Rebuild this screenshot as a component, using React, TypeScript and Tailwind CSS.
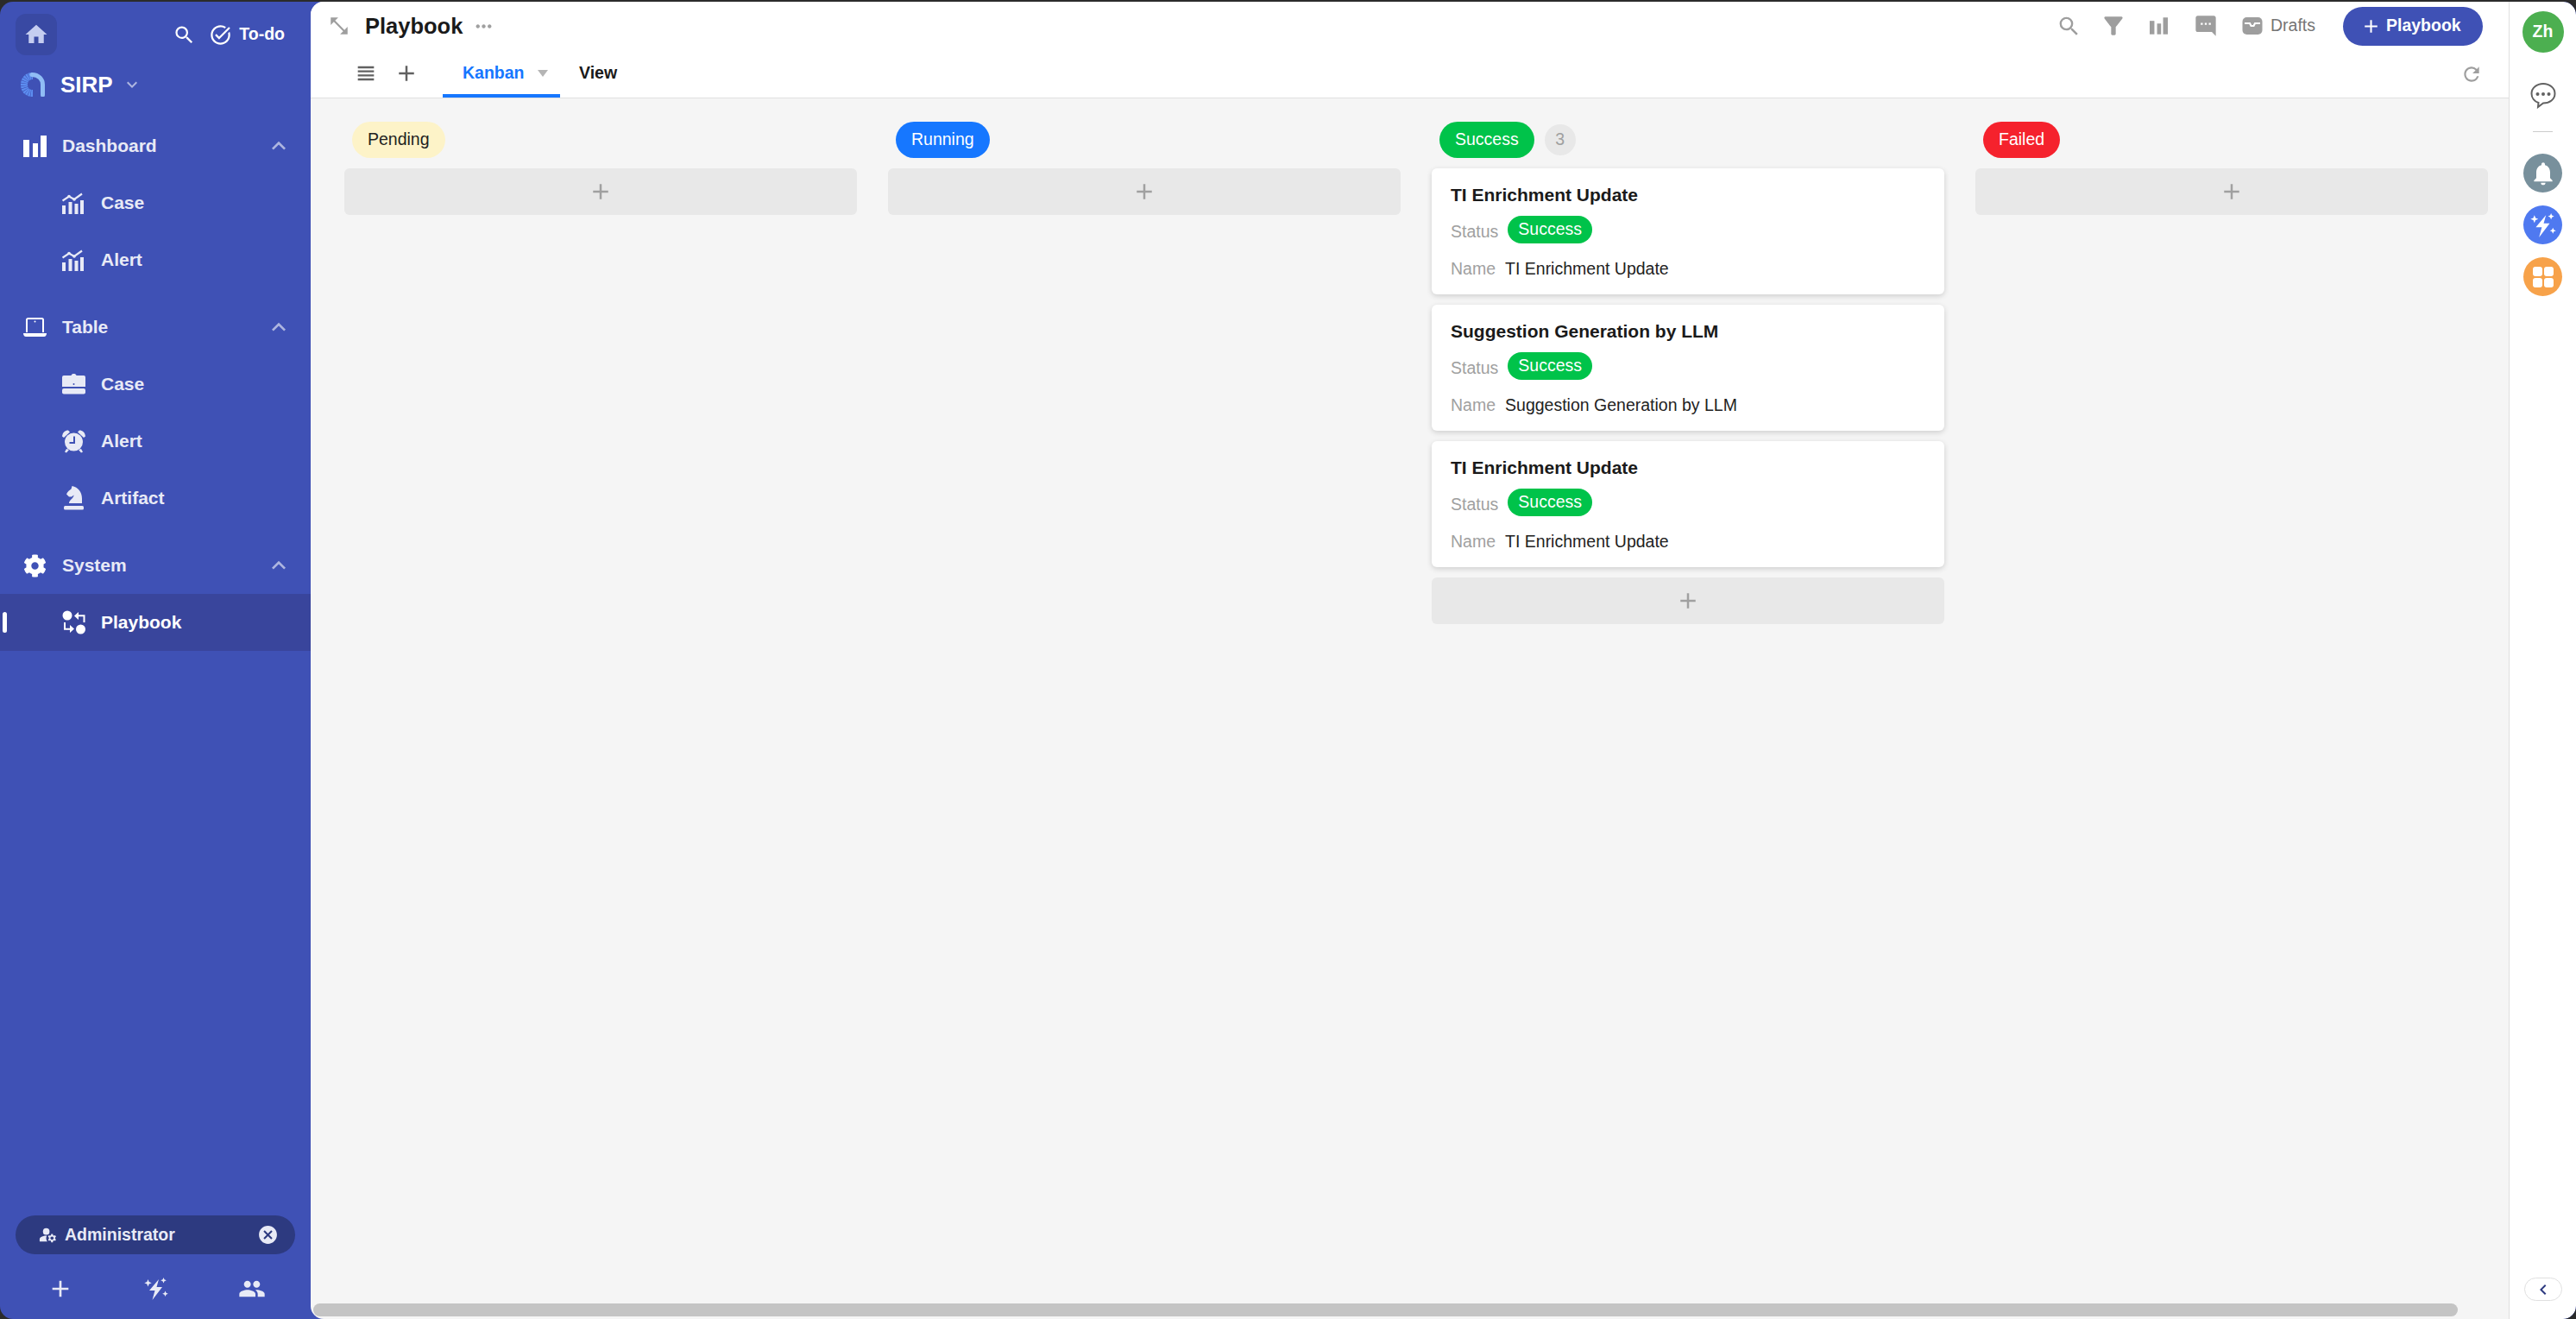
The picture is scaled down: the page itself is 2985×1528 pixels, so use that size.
import React from "react";
import {
  MdAdd,
  MdCancel,
  MdChevronLeft,
  MdExpandLess,
  MdExpandMore,
  MdFilterAlt,
  MdHome,
  MdManageAccounts,
  MdMoreHoriz,
  MdNotifications,
  MdOpenInFull,
  MdOutlineTaskAlt,
  MdPeople,
  MdRefresh,
  MdSearch,
  MdSms,
  MdViewHeadline,
} from "react-icons/md";
import { FaCog } from "react-icons/fa";

const BarsIcon = ({ color, width, height }: { color: string; width: number; height: number }) => (
  <svg width={width} height={height} viewBox="0 0 27 25" fill={color}>
    <rect x="0" y="5" width="7" height="20" />
    <rect x="11" y="9" width="6" height="16" />
    <rect x="20" y="0" width="7" height="25" />
  </svg>
);

const LaptopIcon = () => (
  <svg width="27" height="22" viewBox="0 0 27 22" fill="none">
    <path d="M4 17V2.500A1.500 1.500 0 0 1 5.500 1h16A1.500 1.500 0 0 1 23 2.500V17" stroke="white" strokeWidth="2" />
    <circle cx="13.500" cy="4.500" r="1" fill="white" />
    <path d="M0 18h27c0 2-1 4-3 4H3c-2 0-3-2-3-4z" fill="white" />
  </svg>
);

const TrendIcon = () => (
  <svg width="25" height="25" viewBox="0 0 25 25" fill="#e8eaf6">
    <rect x="0" y="15" width="4" height="10" />
    <rect x="7.500" y="11" width="4" height="14" />
    <rect x="14.500" y="13" width="4" height="12" />
    <rect x="21" y="9" width="4" height="16" />
    <path d="M.5 9.500 8 4.500l6 3.500 9-6.500" fill="none" stroke="#e8eaf6" strokeWidth="2.200" />
    <circle cx="8" cy="4.500" r="1.800" />
    <circle cx="14" cy="8" r="1.800" />
  </svg>
);

const CaseIcon = () => (
  <svg width="27" height="24" viewBox="0 0 27 24" fill="#e8eaf6">
    <path d="M2 2h8.500c.5-1.500 1.500-2 3-2s2.500.5 3 2H25a2 2 0 0 1 2 2v11H0V4a2 2 0 0 1 2-2z" />
    <rect x="0" y="17" width="27" height="6.500" rx="2" />
    <circle cx="13.500" cy="12" r="1" fill="#3f51b5" />
  </svg>
);

const AlarmIcon = () => (
  <svg width="27" height="27" viewBox="0 0 27 27" fill="#e8eaf6">
    <circle cx="13.500" cy="14" r="10.500" />
    <path d="M0 7.500C.5 3 3.500.5 7 .5L9 2.500 2 9z" />
    <path d="M27 7.500C26.500 3 23.500.5 20 .5L18 2.500 25 9z" />
    <path d="M5 22 3 25.500l2 1 3-3.500zM22 22l2 3.500-2 1-3-3.500z" />
    <path d="M14 7.500V15H8.500" fill="none" stroke="#3f51b5" strokeWidth="2" />
  </svg>
);

const KnightIcon = () => (
  <svg width="23" height="28" viewBox="0 0 23 28" fill="#e8eaf6">
    <rect x="0" y="23" width="23" height="4.500" rx="1.500" />
    <path d="M9.500 0c7 1.500 11.500 7 11.500 14.500V20H6c0-4 5.500-5.500 5.500-9.500L9 12.500H6L3 9.500C4 6.500 7 4.500 8.500 3.500z" />
  </svg>
);

const PlaybookIcon = () => (
  <svg width="28" height="28" viewBox="0 0 28 28" fill="white">
    <circle cx="6" cy="6" r="5.500" />
    <circle cx="21.500" cy="22" r="5.500" />
    <path d="M14 6.500 19 2v3.300h7.500V14h-2V7.300H19V11z" />
    <path d="M14 21.500 9 26v-3.300H2V14h2v6.700h5V17z" />
  </svg>
);

const BoltSparkIcon = ({ size, color }: { size: number; color: string }) => (
  <svg width={size} height={size} viewBox="0 0 28 28" fill={color}>
    <path d="M17 3 6 16h6.500L9.500 27l11.500-15h-6.500z" />
    <path d="M4.500 3 5.700 6l3 1.200-3 1.200-1.200 3-1.200-3-3-1.200 3-1.200z" />
    <path d="M22.500 1l1 2.300 2.300 1-2.300 1-1 2.300-1-2.300-2.300-1 2.300-1z" />
    <path d="M24.500 16.500l1 2.300 2.300 1-2.300 1-1 2.300-1-2.300-2.300-1 2.300-1z" />
  </svg>
);

const LogoIcon = () => (
  <svg width="28" height="28" viewBox="0 0 28 28" fill="none">
    <path d="M14 24C7.500 24 4 20 4 14 4 8 8 4 14 4" stroke="#5c8df0" strokeWidth="8" strokeDasharray="2 0.500" />
    <path d="M13 2.500C21 2.500 25.500 8 25.500 14V26" stroke="#90bdf5" strokeWidth="5" strokeLinecap="round" />
  </svg>
);

const InboxIcon = () => (
  <svg width="24" height="20" viewBox="0 0 24 20">
    <rect x="0.500" y="0" width="23" height="20" rx="5" fill="#9e9e9e" />
    <path d="M3 7h6l1.500 3h3L15 7h6" fill="none" stroke="white" strokeWidth="2.200" />
  </svg>
);

const GroupHead = ({ icon, label }: { icon: React.ReactNode; label: string }) => (
  <div className="flex h-[66px] items-center pl-[27px] pr-[21px]">
    <span className="flex w-[45px] items-center text-white">{icon}</span>
    <span className="flex-1 text-[21px] font-bold text-[#e8eaf6]">{label}</span>
    <MdExpandLess size={32} className="text-[#aeb6e0]" />
  </div>
);

const SubItem = ({ icon, label, active }: { icon: React.ReactNode; label: string; active?: boolean }) => (
  <div className={`relative flex h-[66px] items-center pl-[72px] ${active ? "bg-[#39459c]" : ""}`}>
    {active && <span className="absolute left-[3px] top-[21px] h-[24px] w-[5px] rounded-full bg-white" />}
    <span className="flex w-[45px] items-center justify-start">{icon}</span>
    <span className={`text-[21px] font-bold ${active ? "text-white" : "text-[#e8eaf6]"}`}>{label}</span>
  </div>
);

const Sidebar = () => (
  <aside className="flex w-[360px] shrink-0 flex-col">
    <div className="flex items-center pl-[18px] pr-[30px] pt-[14px]">
      <div className="flex h-[48px] w-[48px] items-center justify-center rounded-[12px] bg-[#3949a3]">
        <MdHome size={30} className="text-[#c5cdf0]" />
      </div>
      <MdSearch size={27} className="ml-auto translate-x-[1px] text-white" />
      <MdOutlineTaskAlt size={27} className="ml-[15px] translate-x-[1px] text-white" />
      <span className="ml-[9px] text-[19.5px] font-bold text-white">To-do</span>
    </div>

    <div className="mt-[10px] flex h-[48px] items-center pl-[24px]">
      <LogoIcon />
      <span className="ml-[18px] text-[26px] font-bold text-white">SIRP</span>
      <MdExpandMore size={24} className="ml-[10px] text-[#aeb6e0]" />
    </div>

    <nav className="mt-[14px] flex flex-col gap-[12px]">
      <div>
        <GroupHead icon={<BarsIcon color="white" width={27} height={25} />} label="Dashboard" />
        <SubItem icon={<TrendIcon />} label="Case" />
        <SubItem icon={<TrendIcon />} label="Alert" />
      </div>
      <div>
        <GroupHead icon={<LaptopIcon />} label="Table" />
        <SubItem icon={<CaseIcon />} label="Case" />
        <SubItem icon={<AlarmIcon />} label="Alert" />
        <SubItem icon={<span className="pl-[2px]"><KnightIcon /></span>} label="Artifact" />
      </div>
      <div>
        <GroupHead icon={<FaCog size={27} />} label="System" />
        <SubItem icon={<PlaybookIcon />} label="Playbook" active />
      </div>
    </nav>

    <div className="mt-auto px-[18px] pb-[19px]">
      <div className="flex h-[45px] items-center rounded-full bg-[#2d3a80] pl-[26px] pr-[19px] text-[#e8eaf6]">
        <MdManageAccounts size={23} />
        <span className="ml-[8px] flex-1 text-[19.5px] font-bold">Administrator</span>
        <MdCancel size={25} />
      </div>
      <div className="mt-[24px] flex items-center justify-between pl-[36px] pr-[34px] text-[#e8eaf6]">
        <MdAdd size={32} />
        <BoltSparkIcon size={28} color="#e8eaf6" />
        <MdPeople size={32} />
      </div>
    </div>
  </aside>
);

const TopBar = () => (
  <header className="h-[112px] border-b border-[#e0e0e0] bg-white">
    <div className="flex h-[56px] items-center pl-[20px] pr-[30px]">
      <MdOpenInFull size={26} className="-scale-x-100 text-[#9e9e9e]" />
      <h1 className="ml-[17px] text-[25.5px] font-bold text-[#1a1a1a]">Playbook</h1>
      <MdMoreHoriz size={27} className="ml-[11px] text-[#a0a0a0]" />
      <div className="ml-auto flex items-center text-[#9e9e9e]">
        <MdSearch size={29} />
        <MdFilterAlt size={32} className="ml-[21px]" />
        <span className="ml-[26px]">
          <BarsIcon color="#9e9e9e" width={21} height={20} />
        </span>
        <MdSms size={28} className="ml-[30px] -scale-x-100" />
        <span className="ml-[28px]">
          <InboxIcon />
        </span>
        <span className="ml-[9px] text-[19.5px] text-[#757575]">Drafts</span>
        <button className="ml-[32px] flex h-[45px] w-[162px] items-center rounded-full bg-[#3f51b5] pl-[20px] text-[19.5px] font-bold text-white">
          <MdAdd size={25} />
          <span className="ml-[5px]">Playbook</span>
        </button>
      </div>
    </div>
    <div className="flex h-[55px] items-center pl-[50px] pr-[30px]">
      <MdViewHeadline size={28} className="mb-[2px] text-[#616161]" />
      <MdAdd size={30} className="mb-[2px] ml-[18px] text-[#616161]" />
      <div className="relative ml-[27px] flex h-full w-[136px] items-center pb-[2px] pl-[23px]">
        <span className="text-[19.5px] font-bold text-[#1677ff]">Kanban</span>
        <span className="ml-[15px] h-0 w-0 border-x-[6px] border-t-[8px] border-x-transparent border-t-[#b5b5b5]" />
        <span className="absolute bottom-0 left-0 h-[4px] w-full bg-[#1677ff]" />
      </div>
      <span className="mb-[2px] ml-[22px] text-[19.5px] font-bold text-[#1a1a1a]">View</span>
      <MdRefresh size={26} className="ml-auto text-[#9e9e9e]" />
    </div>
  </header>
);

const AddBox = () => (
  <div className="flex h-[54px] items-center justify-center rounded-[6px] bg-[#e8e8e8]">
    <MdAdd size={30} className="text-[#a0a0a0]" />
  </div>
);

const Chip = ({ children, className }: { children: string; className: string }) => (
  <span className={`flex items-center rounded-full text-[19.5px] ${className}`}>{children}</span>
);

const Card = ({ title }: { title: string }) => (
  <div className="h-[146px] rounded-[6px] bg-white pl-[22px] pt-[18px] shadow-[0_2px_6px_rgba(0,0,0,0.16)]">
    <div className="text-[21px] font-bold leading-[26px] text-[#1a1a1a]">{title}</div>
    <div className="mt-[11px] flex items-start gap-[11px]">
      <span className="mt-[5px] text-[19.5px] leading-[26px] text-[#a0a0a0]">Status</span>
      <Chip className="h-[32px] bg-[#00c34a] px-[12px] text-white">Success</Chip>
    </div>
    <div className="mt-[16px] flex gap-[11px] text-[19.5px] leading-[26px]">
      <span className="text-[#a0a0a0]">Name</span>
      <span className="text-[#222222]">{title}</span>
    </div>
  </div>
);

const Column = ({ chip, count, children }: { chip: React.ReactNode; count?: number; children?: React.ReactNode }) => (
  <section className="flex w-[594px] shrink-0 flex-col gap-[12px]">
    <div className="flex h-[42px] items-center gap-[12px] pl-[9px]">
      {chip}
      {count !== undefined && (
        <span className="flex h-[36px] w-[36px] items-center justify-center rounded-full bg-[#e8e8e8] text-[19.5px] text-[#a0a0a0]">
          {count}
        </span>
      )}
    </div>
    {children}
    <AddBox />
  </section>
);

const RightRail = () => (
  <aside className="flex w-[78px] shrink-0 flex-col items-center rounded-r-[15px] border-l border-[#e0e0e0] bg-white pt-[11px]">
    <div className="flex h-[48px] w-[48px] items-center justify-center rounded-full bg-[#4caf50] text-[19.5px] font-bold text-white">
      Zh
    </div>
    <svg className="mt-[33px]" width="32" height="32" viewBox="0 0 32 32" fill="none">
      <path
        d="M16 3C8.500 3 2.500 8 2.500 14.500c0 5 3.500 9 8 10.500l-.5 5 6-4.500C23.500 25.500 29.500 21 29.500 14.500 29.500 8 23.500 3 16 3z"
        stroke="#616161"
        strokeWidth="2"
      />
      <circle cx="9.500" cy="15" r="2" fill="#616161" />
      <circle cx="16" cy="15" r="2" fill="#616161" />
      <circle cx="22.500" cy="15" r="2" fill="#616161" />
    </svg>
    <div className="mt-[26px] h-px w-[23px] bg-[#cccccc]" />
    <div className="mt-[25px] flex h-[45px] w-[45px] items-center justify-center rounded-full bg-[#78909c]">
      <MdNotifications size={32} className="text-white" />
    </div>
    <div className="mt-[15px] flex h-[45px] w-[45px] items-center justify-center rounded-full bg-[#4f79f0]">
      <BoltSparkIcon size={30} color="white" />
    </div>
    <div className="mt-[15px] flex h-[45px] w-[45px] items-center justify-center rounded-full bg-[#f7a24a]">
      <div className="grid grid-cols-2 gap-[2px]">
        <span className="h-[11px] w-[11px] rounded-[3px] bg-white" />
        <span className="h-[11px] w-[11px] rounded-[3px] bg-white" />
        <span className="h-[11px] w-[11px] rounded-[3px] bg-white" />
        <span className="h-[11px] w-[11px] rounded-[3px] bg-white" />
      </div>
    </div>
    <button className="mb-[21px] mt-auto flex h-[27px] w-[44px] items-center justify-center rounded-full border border-[#e0e0e0]">
      <MdChevronLeft size={24} className="text-[#2d3a80]" />
    </button>
  </aside>
);

export default function App() {
  return (
    <div className="h-screen w-full overflow-hidden bg-[#2b2b2b] pt-[2px] font-['Liberation_Sans',sans-serif]">
      <div className="flex h-full overflow-hidden rounded-[15px] bg-[#3f51b5]">
        <Sidebar />
        <main className="relative flex min-w-0 flex-1 flex-col overflow-hidden rounded-l-[15px] bg-[#f5f5f5]">
          <TopBar />
          <div className="flex flex-1 gap-[36px] pl-[39px] pt-[27px]">
            <Column chip={<Chip className="h-[42px] bg-[#fdf3c8] px-[18px] text-[#222222]">Pending</Chip>} />
            <Column chip={<Chip className="h-[42px] bg-[#1677ff] px-[18px] text-white">Running</Chip>} />
            <Column chip={<Chip className="h-[42px] bg-[#00c34a] px-[18px] text-white">Success</Chip>} count={3}>
              <Card title="TI Enrichment Update" />
              <Card title="Suggestion Generation by LLM" />
              <Card title="TI Enrichment Update" />
            </Column>
            <Column chip={<Chip className="h-[42px] bg-[#f5222d] px-[18px] text-white">Failed</Chip>} />
          </div>
          <div className="absolute bottom-[3px] left-[3px] h-[15px] w-[2485px] rounded-full bg-[#c4c4c4]" />
        </main>
        <RightRail />
      </div>
    </div>
  );
}
